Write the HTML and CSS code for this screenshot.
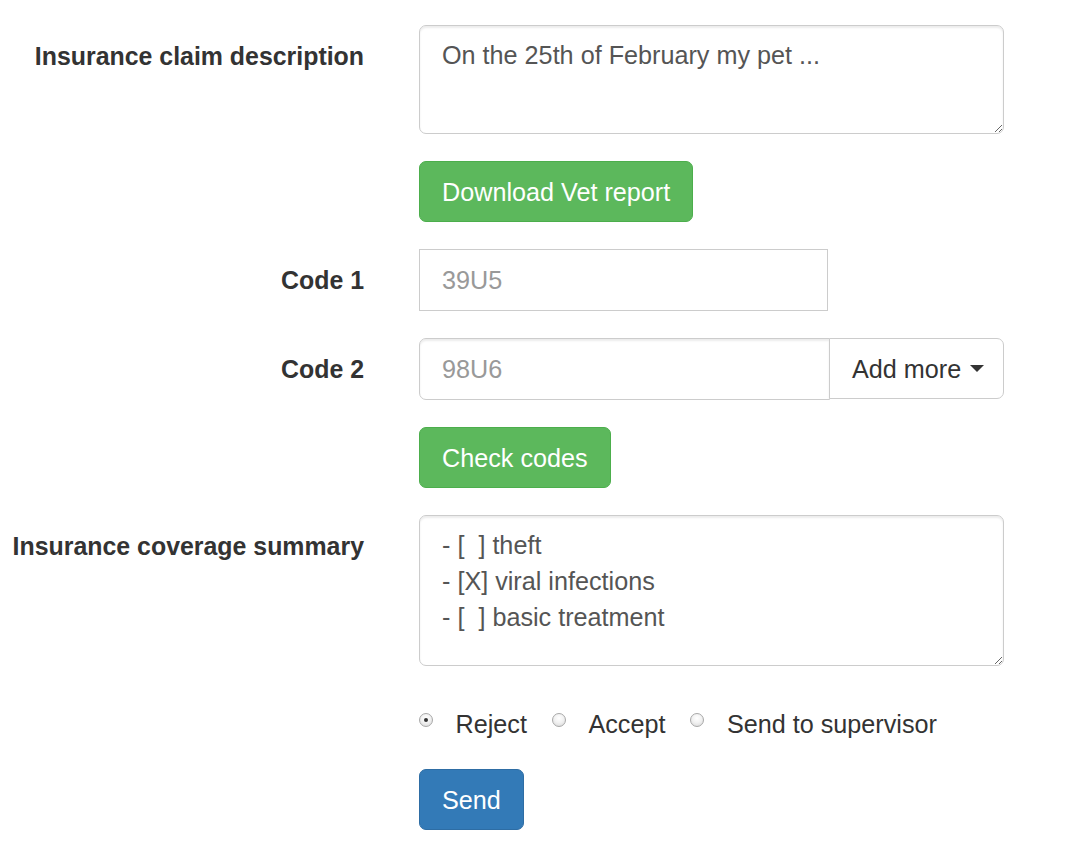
FILE: index.html
```html
<!DOCTYPE html>
<html>
<head>
<meta charset="utf-8">
<link rel="stylesheet" href="styles.css">
</head>
<body>
<form class="form">
  <div class="row">
    <label class="label">Insurance claim description</label>
    <div class="field">
      <textarea class="control area area-1">On the 25th of February my pet ...</textarea>
    </div>
  </div>
  <div class="row">
    <div></div>
    <div class="field"><button type="button" class="btn btn-success">Download Vet report</button></div>
  </div>
  <div class="row">
    <label class="label">Code 1</label>
    <div class="field"><input class="control code1" type="text" placeholder="39U5"></div>
  </div>
  <div class="row">
    <label class="label">Code 2</label>
    <div class="field">
      <div class="input-group">
        <input class="control group-input" type="text" placeholder="98U6">
        <button type="button" class="btn btn-default group-btn">Add more <span class="caret"></span></button>
      </div>
    </div>
  </div>
  <div class="row">
    <div></div>
    <div class="field"><button type="button" class="btn btn-success">Check codes</button></div>
  </div>
  <div class="row">
    <label class="label">Insurance coverage summary</label>
    <div class="field">
      <textarea class="control area area-2">- [  ] theft
- [X] viral infections
- [  ] basic treatment</textarea>
    </div>
  </div>
  <div class="row">
    <div></div>
    <div class="field radios">
      <label class="radio-inline"><input type="radio" name="decision" class="radio" checked> Reject</label>
      <label class="radio-inline"><input type="radio" name="decision" class="radio"> Accept</label>
      <label class="radio-inline"><input type="radio" name="decision" class="radio"> Send to supervisor</label>
    </div>
  </div>
  <div class="row last">
    <div></div>
    <div class="field"><button type="button" class="btn btn-primary">Send</button></div>
  </div>
</form>
</body>
</html>
```
FILE: styles.css
```css
html, body {
  margin: 0;
  padding: 0;
  background: #fff;
}
body {
  font-family: "Liberation Sans", Arial, sans-serif;
  font-size: 25.2px;
  line-height: 36px;
  color: #333;
}
.form {
  padding-top: 25px;
}
.row {
  display: grid;
  grid-template-columns: 364px 585px;
  column-gap: 55px;
  margin-bottom: 27px;
}
.row.last {
  margin-bottom: 0;
}
.label {
  text-align: right;
  font-weight: bold;
  font-size: 24.9px;
  padding-top: 13px;
  white-space: nowrap;
}
.field {
  min-width: 0;
}
.control {
  display: block;
  box-sizing: border-box;
  width: 100%;
  height: 62px;
  padding: 12px 22px;
  font-family: inherit;
  font-size: 25.2px;
  line-height: 36px;
  color: #555;
  background: #fff;
  border: 1px solid #ccc;
  border-radius: 7px;
  box-shadow: inset 0 2px 2px rgba(0,0,0,0.075);
  margin: 0;
}
.control::placeholder {
  color: #999;
}
.area {
  resize: vertical;
}
.area-1 {
  height: 109px;
  padding-top: 11px;
}
.area-2 {
  height: 151px;
  padding-top: 11px;
}
.code1 {
  width: 409px;
  border-radius: 0;
  box-shadow: none;
}
.btn {
  display: inline-block;
  box-sizing: border-box;
  height: 61px;
  padding: 11px 22px;
  font-family: inherit;
  font-size: 25.2px;
  line-height: 36px;
  border: 1px solid transparent;
  border-radius: 7px;
  cursor: pointer;
  margin: 0;
  white-space: nowrap;
}
.btn-success {
  color: #fff;
  background: #5cb85c;
  border-color: #4cae4c;
}
.btn-primary {
  color: #fff;
  background: #337ab7;
  border-color: #2e6da4;
}
.btn-default {
  color: #333;
  background: #fff;
  border-color: #ccc;
}
.input-group {
  display: flex;
  width: 585px;
}
.group-input {
  flex: 1;
  width: auto;
  border-radius: 7px 0 0 7px;
}
.group-btn {
  height: 61px;
  width: 175px;
  margin-left: -1px;
  padding: 11px 22px;
  border-radius: 0 7px 7px 0;
  text-align: left;
}
.caret {
  display: inline-block;
  width: 0;
  height: 0;
  margin-left: 2px;
  vertical-align: middle;
  border-top: 7px solid #333;
  border-left: 7px solid transparent;
  border-right: 7px solid transparent;
  position: relative;
  top: -2px;
}
.radios {
  display: flex;
  padding-top: 13px;
  height: 49px;
  box-sizing: border-box;
}
.radio-inline {
  display: flex;
  align-items: flex-start;
  margin-right: 25px;
  cursor: pointer;
}
.radio {
  appearance: none;
  -webkit-appearance: none;
  box-sizing: border-box;
  width: 14px;
  height: 14px;
  margin: 7px 22.5px 0 0;
  border: 1px solid #a8a8a8;
  border-radius: 50%;
  background: radial-gradient(circle at 50% 35%, #ffffff 0%, #f2f2f2 45%, #d6d6d6 100%);
  position: relative;
  flex: none;
}
.radio:checked::after {
  content: "";
  position: absolute;
  left: 50%;
  top: 50%;
  width: 4px;
  height: 4px;
  margin: -2px 0 0 -2px;
  border-radius: 50%;
  background: #333;
}
```
